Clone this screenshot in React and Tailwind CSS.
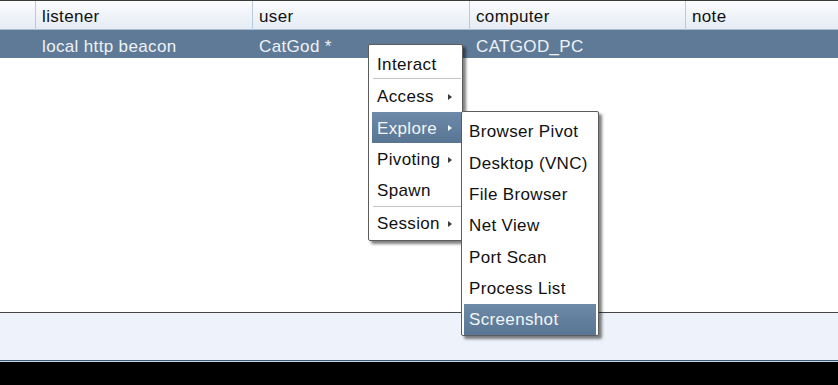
import React from "react";

const font = { fontFamily: '"Liberation Sans", Arial, sans-serif' };

function Arrow({ light }) {
  return (
    <span
      className={`ml-auto mr-[10px] block h-0 w-0 border-y-[3.5px] border-l-[4px] border-y-transparent ${
        light ? "border-l-[#f4f7fa]" : "border-l-[#3a3a3a]"
      }`}
    />
  );
}

function Item({ label, arrow, active, h = "h-[31.5px]", pt = "pt-[2px]" }) {
  return (
    <div
      className={`flex items-center ${h} pl-[5px] ${pt} ${
        active
          ? "bg-gradient-to-b from-[#6d8aa8] to-[#587593] text-[#f3f6f9]"
          : "text-[#111]"
      }`}
    >
      <span>{label}</span>
      {arrow && <Arrow light={active} />}
    </div>
  );
}

function Sep() {
  return <div className="mx-[1px] h-[2px] border-t border-[#c4c4c4] bg-white" />;
}

export default function App() {
  const cols = "grid grid-cols-[36px_217px_217px_216px_1fr]";
  const sub = "h-[31.3px]";
  return (
    <div
      className="relative flex h-[385px] w-[838px] flex-col overflow-hidden bg-white text-[17px] tracking-[0.35px]"
      style={font}
    >
      {/* header */}
      <div
        className={`${cols} h-[30px] border-t border-b border-t-[#3a3a3a] border-b-[#a9bdd3] bg-gradient-to-b from-[#fbfcfe] to-[#e5ecf5] text-[#111]`}
      >
        <div className="border-r border-[#b9cadc]" />
        <div className="flex items-center border-r border-[#b9cadc] pl-[6px] pt-[3px]">listener</div>
        <div className="flex items-center border-r border-[#b9cadc] pl-[6px] pt-[3px]">user</div>
        <div className="flex items-center border-r border-[#b9cadc] pl-[6px] pt-[3px]">computer</div>
        <div className="flex items-center pl-[6px] pt-[3px]">note</div>
      </div>
      {/* selected row */}
      <div className={`${cols} h-[28px] bg-[#5e7a97] text-[#eef2f6]`}>
        <div />
        <div className="flex items-center pl-[6px] pt-[4px]">local http beacon</div>
        <div className="flex items-center pl-[6px] pt-[4px]">CatGod *</div>
        <div className="flex items-center pl-[6px] pt-[4px]">CATGOD_PC</div>
        <div />
      </div>
      <div className="flex-1 bg-white" />
      {/* bottom panel */}
      <div className="h-[48px] border-t border-[#464646] bg-[#eef2fa]" />
      <div className="h-[1px] bg-[#3b5b7d]" />
      <div className="h-[1px] bg-[#c9d4e2]" />
      <div className="h-[23px] bg-black" />

      {/* main popup menu */}
      <div className="absolute left-[368px] top-[44px] w-[95px] rounded-[2px] border border-[#5c5c5c] bg-white pt-[3px] pb-[1px] pl-[3px] shadow-[3px_3px_3px_rgba(0,0,0,0.5)]">
        <Item label="Interact" h="h-[30px]" pt="pt-[3px]" />
        <Sep />
        <Item label="Access" arrow />
        <Item label="Explore" arrow active />
        <Item label="Pivoting" arrow />
        <Item label="Spawn" h="h-[31px]" />
        <Sep />
        <Item label="Session" arrow pt="pt-[1px]" />
      </div>

      {/* submenu */}
      <div className="absolute left-[461px] top-[111px] w-[138px] rounded-[2px] border border-[#5c5c5c] bg-white px-[2px] pt-[4px] pb-0 shadow-[3px_3px_3px_rgba(0,0,0,0.5)]">
        <Item label="Browser Pivot" h={sub} pt="pt-[1px]" />
        <Item label="Desktop (VNC)" h={sub} pt="pt-[1px]" />
        <Item label="File Browser" h={sub} pt="pt-[1px]" />
        <Item label="Net View" h={sub} pt="pt-[1px]" />
        <Item label="Port Scan" h={sub} pt="pt-[1px]" />
        <Item label="Process List" h={sub} pt="pt-[1px]" />
        <Item label="Screenshot" active h={sub} pt="pt-[1px]" />
      </div>
    </div>
  );
}
